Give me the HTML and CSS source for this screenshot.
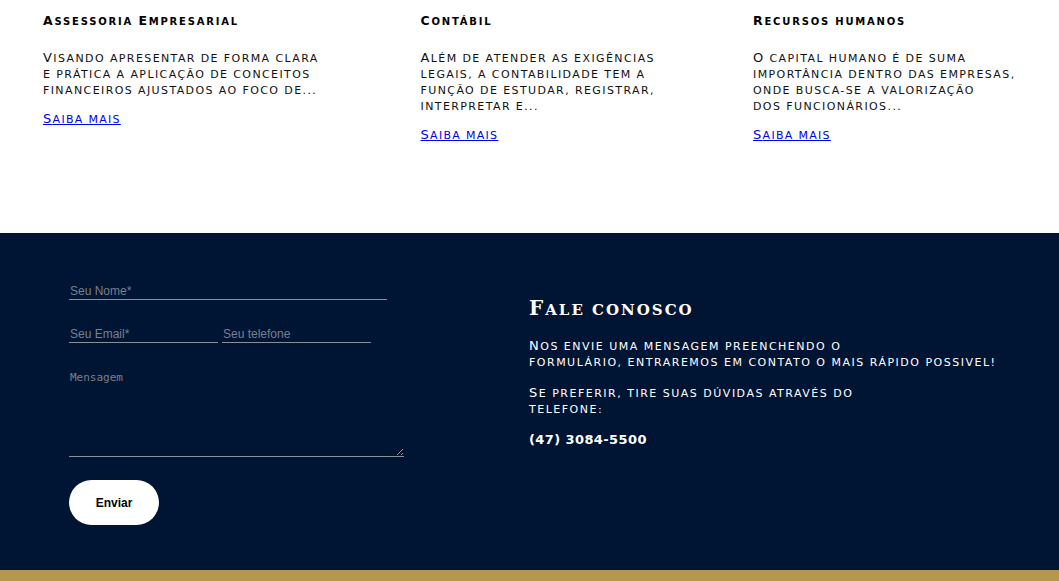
FILE: index.html
```html
<!DOCTYPE html>
<html lang="pt-BR">
<head>
<meta charset="utf-8">
<title>Serviços</title>
<link rel="stylesheet" href="styles.css">
</head>
<body>
<section class="services">
  <article class="service">
    <h3 class="service-title">Assessoria <span class="cap">E</span>mpresarial</h3>
    <p class="service-text">Visando apresentar de forma clara<br>e prática a aplicação de conceitos<br>financeiros ajustados ao foco de...</p>
    <a class="service-link" href="#">Saiba mais</a>
  </article>
  <article class="service">
    <h3 class="service-title">Contábil</h3>
    <p class="service-text">Além de atender as exigências<br>legais, a contabilidade tem a<br>função de estudar, registrar,<br>interpretar e...</p>
    <a class="service-link" href="#">Saiba mais</a>
  </article>
  <article class="service">
    <h3 class="service-title">Recursos humanos</h3>
    <p class="service-text">O capital humano é de suma<br>importância dentro das empresas,<br>onde busca-se a valorização<br>dos funcionários...</p>
    <a class="service-link" href="#">Saiba mais</a>
  </article>
</section>
<section class="contact">
  <form class="contact-form">
    <input class="field field-full" type="text" placeholder="Seu Nome*">
    <div class="field-row">
      <input class="field field-half" type="email" placeholder="Seu Email*">
      <input class="field field-half" type="tel" placeholder="Seu telefone">
    </div>
    <textarea class="field-message" placeholder="Mensagem"></textarea>
    <button class="send" type="button">Enviar</button>
  </form>
  <div class="contact-info">
    <h2 class="contact-title">Fale conosco</h2>
    <p class="contact-text">Nos envie uma mensagem preenchendo o<br>formulário, entraremos em contato o mais rápido possivel!</p>
    <p class="contact-text">Se preferir, tire suas dúvidas através do<br>telefone:</p>
    <p class="contact-phone">(47) 3084-5500</p>
  </div>
</section>
<div class="gold-bar"></div>
</body>
</html>
```
FILE: styles.css
```css
html, body {
  margin: 0;
  padding: 0;
}
body {
  width: 1059px;
  height: 581px;
  overflow: hidden;
  background: #ffffff;
  font-family: "DejaVu Sans", sans-serif;
}
.services {
  height: 233px;
  box-sizing: border-box;
  padding: 13px 41px 0 43px;
  display: grid;
  grid-template-columns: 280px 235px 265px;
  justify-content: space-between;
  align-content: start;
}
.service-title {
  margin: 0;
  font-size: 10px;
  line-height: 16px;
  font-weight: bold;
  text-transform: uppercase;
  color: #000;
  letter-spacing: 1.8px;
  white-space: nowrap;
}
.service-title::first-letter,
.service-title .cap {
  font-size: 12.5px;
}
.service-text {
  margin: 20px 0 9px;
  font-size: 11px;
  line-height: 16px;
  text-transform: uppercase;
  color: #111;
  letter-spacing: 1.4px;
  white-space: nowrap;
}
.service-text::first-letter,
.service-link::first-letter,
.contact-text::first-letter {
  font-size: 13px;
}
.service-link {
  display: inline-block;
  font-size: 11px;
  line-height: 16px;
  text-transform: uppercase;
  color: #0000ee;
  letter-spacing: 1.3px;
  text-decoration: underline;
}
.contact {
  height: 337px;
  box-sizing: border-box;
  background: #001433;
  display: flex;
  padding: 48px 0 0 69px;
  gap: 125px;
}
.contact-form {
  width: 335px;
  display: flex;
  flex-direction: column;
}
.field {
  background: transparent;
  border: 0;
  border-bottom: 1px solid #8a8f99;
  color: #fff;
  font-family: "Liberation Sans", Arial, sans-serif;
  font-size: 12px;
  padding: 2px 1px 0;
  height: 19px;
  box-sizing: border-box;
  outline: none;
}
.field::placeholder,
.field-message::placeholder {
  color: #7a808c;
}
.field-full {
  width: 318px;
}
.field-row {
  display: flex;
  gap: 4px;
  margin-top: 24px;
}
.field-half {
  width: 149px;
}
.field-message {
  margin-top: 25px;
  width: 335px;
  height: 89px;
  box-sizing: border-box;
  background: transparent;
  border: 0;
  border-bottom: 1px solid #8a8f99;
  color: #fff;
  font-family: "DejaVu Sans Mono", monospace;
  font-size: 11px;
  padding: 3px 1px;
  outline: none;
}
.send {
  margin-top: 23px;
  width: 90px;
  height: 45px;
  border: 0;
  border-radius: 23px;
  background: #fff;
  color: #000;
  font-family: "Liberation Sans", Arial, sans-serif;
  font-size: 12px;
  font-weight: bold;
  cursor: pointer;
}
.contact-info {
  padding-top: 14px;
  color: #fff;
}
.contact-title {
  margin: 0 0 15px;
  font-size: 15px;
  line-height: 26px;
  font-weight: bold;
  text-transform: uppercase;
  letter-spacing: 2px;
  font-family: "DejaVu Serif", serif;
}
.contact-title::first-letter {
  font-size: 20px;
}
.contact-text {
  margin: 0 0 14px;
  font-size: 11px;
  line-height: 16px;
  text-transform: uppercase;
  letter-spacing: 1.5px;
  white-space: nowrap;
}
.contact-phone {
  margin: 4px 0 0;
  font-size: 13px;
  line-height: 16px;
  font-weight: bold;
  letter-spacing: 0.4px;
}
.gold-bar {
  height: 11px;
  background: #b5974f;
}
```
